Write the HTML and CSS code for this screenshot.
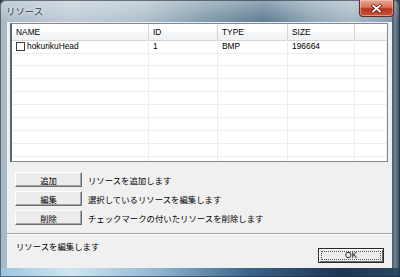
FILE: index.html
```html
<!DOCTYPE html>
<html lang="ja">
<head>
    <meta charset="UTF-8">
    <title>リソース</title>
    <link rel="stylesheet" href="styles.css">
</head>
<body>
    <div class="window">
        <div class="titlebar">
            <span class="title">リソース</span>
            <div class="close-btn">
                <svg width="11" height="9" viewBox="0 0 11 9">
                    <path d="M2 1.5 L9 7.5 M9 1.5 L2 7.5" stroke="#5a1408" stroke-width="3.2" stroke-linecap="square"/>
                    <path d="M2 1.5 L9 7.5 M9 1.5 L2 7.5" stroke="#fff" stroke-width="1.8" stroke-linecap="square"/>
                </svg>
            </div>
        </div>
        <div class="client">
            <div class="list">
                <div class="list-row list-head">
                    <div class="cell">NAME</div>
                    <div class="cell">ID</div>
                    <div class="cell">TYPE</div>
                    <div class="cell">SIZE</div>
                    <div class="cell"></div>
                </div>
                <div class="list-row">
                    <div class="cell"><span class="check"></span>hokurikuHead</div>
                    <div class="cell">1</div>
                    <div class="cell">BMP</div>
                    <div class="cell">196664</div>
                    <div class="cell"></div>
                </div>
                <div class="list-row"><div class="cell"></div><div class="cell"></div><div class="cell"></div><div class="cell"></div><div class="cell"></div></div>
                <div class="list-row"><div class="cell"></div><div class="cell"></div><div class="cell"></div><div class="cell"></div><div class="cell"></div></div>
                <div class="list-row"><div class="cell"></div><div class="cell"></div><div class="cell"></div><div class="cell"></div><div class="cell"></div></div>
                <div class="list-row"><div class="cell"></div><div class="cell"></div><div class="cell"></div><div class="cell"></div><div class="cell"></div></div>
                <div class="list-row"><div class="cell"></div><div class="cell"></div><div class="cell"></div><div class="cell"></div><div class="cell"></div></div>
                <div class="list-row"><div class="cell"></div><div class="cell"></div><div class="cell"></div><div class="cell"></div><div class="cell"></div></div>
                <div class="list-row"><div class="cell"></div><div class="cell"></div><div class="cell"></div><div class="cell"></div><div class="cell"></div></div>
                <div class="list-row"><div class="cell"></div><div class="cell"></div><div class="cell"></div><div class="cell"></div><div class="cell"></div></div>
                <div class="list-row"><div class="cell"></div><div class="cell"></div><div class="cell"></div><div class="cell"></div><div class="cell"></div></div>
            </div>

            <div class="actions">
                <div class="action">
                    <button class="btn">追加</button>
                    <span class="action-text">リソースを追加します</span>
                </div>
                <div class="action">
                    <button class="btn">編集</button>
                    <span class="action-text">選択しているリソースを編集します</span>
                </div>
                <div class="action">
                    <button class="btn">削除</button>
                    <span class="action-text">チェックマークの付いたリソースを削除します</span>
                </div>
            </div>

            <div class="separator"></div>

            <div class="footer">
                <span class="status">リソースを編集します</span>
                <button class="btn btn-ok"><span class="focus">OK</span></button>
            </div>
        </div>
    </div>
</body>
</html>
```

FILE: styles.css
```css
html, body {
    margin: 0;
    padding: 0;
}
body {
    width: 400px;
    height: 277px;
    overflow: hidden;
    font-family: "Liberation Sans", "Noto Sans CJK JP", sans-serif;
    font-size: 8.4px;
    color: #000;
    background: #2b4155;
}
.window {
    box-sizing: border-box;
    width: 400px;
    height: 277px;
    display: flex;
    flex-direction: column;
    padding: 0 8px 9px 7px;
    border-radius: 6px 6px 0 0;
    background:
        linear-gradient(to right, #9cc6de, #cfe6f2 18%, #8fb4cf 40%, #3d6488 62%, #1c3452 85%, #2a4662) left bottom / 100% 9px no-repeat,
        linear-gradient(to right, rgba(20, 35, 50, 0.55), rgba(40, 60, 80, 0.2) 40%, rgba(20, 35, 50, 0.7)) right top / 8px 100% no-repeat,
        linear-gradient(to bottom, rgba(255, 255, 255, 0.35), rgba(255, 255, 255, 0) 22px),
        linear-gradient(to right, #a9b8c4 0%, #bfcbd5 18%, #b1c0cb 35%, #7f99ab 52%, #5d7c92 66%, #8ea5b5 78%, #a7b8c4 88%, #7d95a7 100%);
    box-shadow: inset 0 0 0 1px rgba(30, 45, 60, 0.6);
}
.titlebar {
    height: 22px;
    flex: none;
    display: flex;
    justify-content: space-between;
    align-items: flex-start;
    margin-right: -8px;
    margin-left: -1px;
}
.title {
    margin-top: 4px;
    font-family: "Noto Sans CJK JP", sans-serif;
    font-size: 9.4px;
    color: #333c44;
    text-shadow: 0 0 3px rgba(255, 255, 255, 0.9), 0 0 6px rgba(255, 255, 255, 0.6);
}
.close-btn {
    width: 33px;
    height: 16px;
    margin-right: 6px;
    border: 1px solid #5b2a22;
    border-top: none;
    border-radius: 0 0 4px 4px;
    background: linear-gradient(to bottom, #e8a896 0%, #d6735d 45%, #b7341c 55%, #c9543a 100%);
    box-shadow: inset 0 0 0 1px rgba(255, 210, 190, 0.5);
    display: flex;
    justify-content: center;
    align-items: center;
}
.client {
    flex: 1;
    background: #f0f0f0;
    display: flex;
    flex-direction: column;
}
.list {
    margin: 1px 4px 0 3px;
    height: 139px;
    box-sizing: border-box;
    border: 1px solid #828790;
    border-left: 2px solid #5d6268;
    background: #fff;
    overflow: hidden;
}
.list-row {
    display: grid;
    grid-template-columns: 137px 69px 70px 67px 1fr;
    height: 13px;
}
.list-row .cell {
    border-right: 1px solid #ededed;
    border-bottom: 1px solid #ededed;
    padding-left: 4px;
    line-height: 13px;
    white-space: nowrap;
    display: flex;
    align-items: center;
}
.list-head {
    height: 16px;
}
.list-head .cell {
    line-height: 16px;
    background: linear-gradient(to bottom, #ffffff, #ffffff 45%, #f5f6f7 55%, #f0f1f2);
    border-right: 1px solid #d5d5d5;
    border-bottom: 1px solid #d5d5d5;
}
.list-head .cell:last-child {
    border-right: none;
}
.check {
    width: 7px;
    height: 7px;
    border: 1px solid #3b3b3b;
    background: #fff;
    margin-right: 2px;
    flex: none;
}
.actions {
    display: flex;
    flex-direction: column;
    gap: 4px;
    padding: 10px 0 0 8px;
}
.action {
    display: flex;
    align-items: center;
    gap: 6px;
}
.btn {
    box-sizing: border-box;
    width: 67px;
    height: 15px;
    padding: 0;
    margin: 0;
    font-family: "Noto Sans CJK JP", sans-serif;
    font-size: 8.4px;
    color: #000;
    background: #ececec;
    border: 1px solid;
    border-color: #ffffff #6c6c6c #6c6c6c #ffffff;
    box-shadow: inset -1px -1px 0 #a8a8a8;
}
.action-text {
    font-family: "Noto Sans CJK JP", sans-serif;
}
.separator {
    margin-top: 8px;
    border-top: 1px solid #a0a0a0;
    border-bottom: 1px solid #ffffff;
}
.footer {
    flex: 1;
    display: flex;
    justify-content: space-between;
    padding: 0 8px 0 9px;
}
.status {
    margin-top: 5px;
    font-family: "Noto Sans CJK JP", sans-serif;
}
.btn-ok {
    align-self: flex-end;
    margin-bottom: 5px;
    width: 66px;
    height: 15px;
    border: 1px solid #2a2a2a;
    box-shadow: inset 1px 1px 0 #ffffff, inset -1px -1px 0 #6c6c6c;
    font-family: "Liberation Sans", sans-serif;
    display: flex;
    padding: 2px;
}
.focus {
    flex: 1;
    border: 1px dotted #555;
    line-height: 7px;
    text-align: center;
}
```
